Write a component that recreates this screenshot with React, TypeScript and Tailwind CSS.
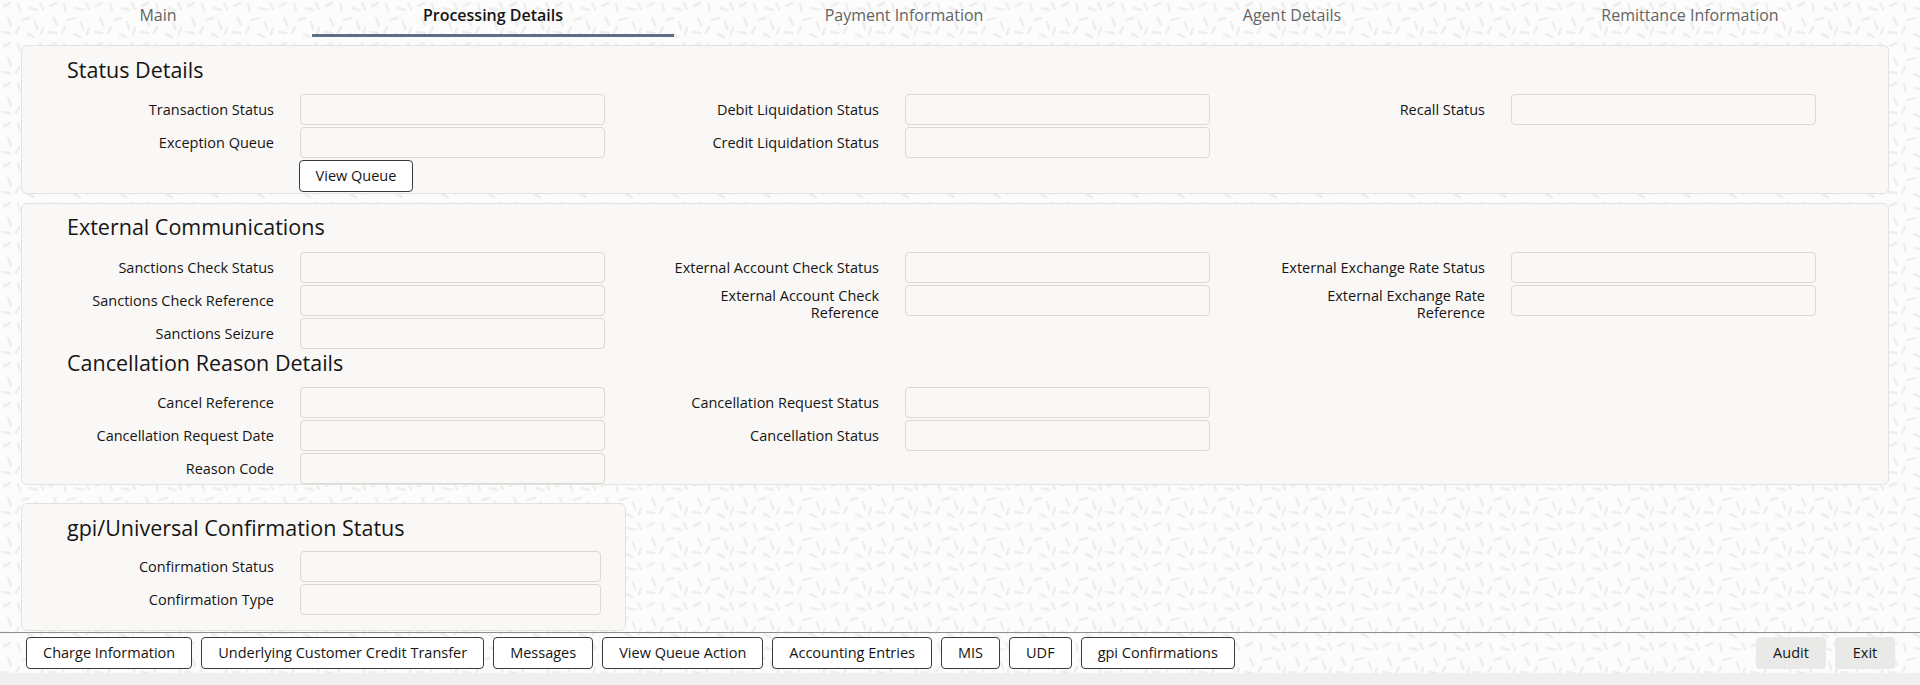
import React from 'react'

const tabs = [
  { name: 'Main', w: 'w-[308px]' },
  { name: 'Processing Details', w: 'w-[362px]', active: true },
  { name: 'Payment Information', w: 'w-[460px]' },
  { name: 'Agent Details', w: 'w-[316px]' },
  { name: 'Remittance Information', w: 'w-[480px]' },
]

const footerButtons = [
  'Charge Information',
  'Underlying Customer Credit Transfer',
  'Messages',
  'View Queue Action',
  'Accounting Entries',
  'MIS',
  'UDF',
  'gpi Confirmations',
]

const Field = ({ label, wrap, narrow }: { label: string; wrap?: boolean; narrow?: boolean }) => (
  <div className="flex h-[31px] items-center justify-end gap-[26px]">
    <div
      className={
        wrap
          ? 'mt-[7px] w-[215px] text-right text-[14.5px] leading-[17px] text-[#161513]'
          : 'w-[215px] text-right text-[14.5px] leading-[17px] text-[#161513]'
      }
    >
      {label}
    </div>
    <div
      className={
        narrow
          ? 'h-[31px] w-[301px] shrink-0 rounded-[4px] border border-[#dad9d6] bg-[#f9f8f7]'
          : 'h-[31px] w-[305px] shrink-0 rounded-[4px] border border-[#dad9d6] bg-[#f9f8f7]'
      }
    />
  </div>
)

const Heading = ({ children }: { children: React.ReactNode }) => (
  <h2 className="pl-[45px] text-[21.5px] font-medium leading-[28px] text-[#161513]">{children}</h2>
)

// faint brush-stroke texture behind the page
const Background = () => (
  <svg className="pointer-events-none absolute inset-0 h-full w-full" aria-hidden="true">
    <defs>
      <pattern id="marks" width="46" height="40" patternUnits="userSpaceOnUse">
        <g stroke="#eeeeed" strokeWidth="2.6" strokeLinecap="round" fill="none">
          <path d="M4 6 l6 -3" />
          <path d="M18 4 l2 7" />
          <path d="M30 8 l7 2" />
          <path d="M40 3 l3 6" />
          <path d="M8 18 l3 7" />
          <path d="M22 20 l7 -2" />
          <path d="M35 22 l2 7" />
          <path d="M3 32 l7 1" />
          <path d="M16 33 l3 -6" />
          <path d="M28 34 l6 3" />
          <path d="M41 34 l2 -6" />
        </g>
      </pattern>
    </defs>
    <rect width="100%" height="100%" fill="url(#marks)" />
  </svg>
)

export default function App() {
  return (
    <div className="relative flex h-[685px] w-[1920px] flex-col overflow-hidden bg-[#fcfcfc] font-['Open_Sans',sans-serif]">
      <Background />
      <div className="relative h-[632px] overflow-hidden">
        {/* tabs */}
        <div className="ml-[4px] flex h-[37px]">
          {tabs.map((t) => (
            <div key={t.name} className={`${t.w} flex shrink-0 flex-col justify-between`}>
              <div
                className={
                  t.active
                    ? 'pt-[3px] text-center text-[16px] font-semibold leading-6 text-[#161513]'
                    : 'pt-[3px] text-center text-[16px] leading-6 text-[#646464]'
                }
              >
                {t.name}
              </div>
              {t.active ? <div className="h-[3px] bg-[#5f6e84]" /> : null}
            </div>
          ))}
        </div>

        {/* Status Details */}
        <div className="ml-[21px] mt-[8px] w-[1868px] rounded-[6px] border border-[#e3e2df] bg-[#f9f8f7] pb-[1px] pt-[10px]">
          <Heading>Status Details</Heading>
          <div className="mt-[10px] grid grid-cols-[583px_605px_606px]">
            <div className="flex flex-col gap-[2px]">
              <Field label="Transaction Status" />
              <Field label="Exception Queue" />
              <div className="flex justify-end">
                <div className="w-[306px]">
                  <button className="h-[32px] w-[114px] rounded-[4px] border border-[#3a3a3a] bg-white text-[14.5px] text-[#161513]">
                    View Queue
                  </button>
                </div>
              </div>
            </div>
            <div className="flex flex-col gap-[2px]">
              <Field label="Debit Liquidation Status" />
              <Field label="Credit Liquidation Status" />
            </div>
            <div className="flex flex-col gap-[2px]">
              <Field label="Recall Status" />
            </div>
          </div>
        </div>

        {/* External Communications + Cancellation */}
        <div className="ml-[21px] mt-[9px] w-[1868px] rounded-[6px] border border-[#e3e2df] bg-[#f9f8f7] pt-[9px]">
          <Heading>External Communications</Heading>
          <div className="mt-[11px] grid grid-cols-[583px_605px_606px]">
            <div className="flex flex-col gap-[2px]">
              <Field label="Sanctions Check Status" />
              <Field label="Sanctions Check Reference" />
              <Field label="Sanctions Seizure" />
            </div>
            <div className="flex flex-col gap-[2px]">
              <Field label="External Account Check Status" />
              <Field label="External Account Check Reference" wrap />
            </div>
            <div className="flex flex-col gap-[2px]">
              <Field label="External Exchange Rate Status" />
              <Field label="External Exchange Rate Reference" wrap />
            </div>
          </div>
          <Heading>Cancellation Reason Details</Heading>
          <div className="mt-[10px] grid grid-cols-[583px_605px_606px]">
            <div className="flex flex-col gap-[2px]">
              <Field label="Cancel Reference" />
              <Field label="Cancellation Request Date" />
              <Field label="Reason Code" />
            </div>
            <div className="flex flex-col gap-[2px]">
              <Field label="Cancellation Request Status" />
              <Field label="Cancellation Status" />
            </div>
            <div />
          </div>
        </div>

        {/* gpi/Universal Confirmation Status */}
        <div className="ml-[21px] mt-[18px] w-[605px] rounded-[6px] border border-[#e3e2df] bg-[#f9f8f7] pb-[15px] pt-[10px]">
          <Heading>gpi/Universal Confirmation Status</Heading>
          <div className="mt-[9px] flex w-[579px] flex-col gap-[2px]">
            <Field label="Confirmation Status" narrow />
            <Field label="Confirmation Type" narrow />
          </div>
        </div>
      </div>

      {/* footer */}
      <div className="relative flex h-[53px] flex-col border-t border-[#8f8f8f]">
        <div className="flex items-center justify-between px-[26px] pt-[4px]">
          <div className="flex gap-[9px]">
            {footerButtons.map((b) => (
              <button
                key={b}
                className="h-[32px] rounded-[4px] border border-[#3a3a3a] bg-white px-4 text-[14.5px] text-[#161513]"
              >
                {b}
              </button>
            ))}
          </div>
          <div className="mr-[-1px] flex gap-[9px]">
            <button className="h-[32px] w-[70px] rounded-[4px] bg-[#e9e9e8] text-[14.5px] text-[#161513]">Audit</button>
            <button className="h-[32px] w-[60px] rounded-[4px] bg-[#e9e9e8] text-[14.5px] text-[#161513]">Exit</button>
          </div>
        </div>
        <div className="mt-auto h-[12px] bg-[#efefef]" />
      </div>
    </div>
  )
}
